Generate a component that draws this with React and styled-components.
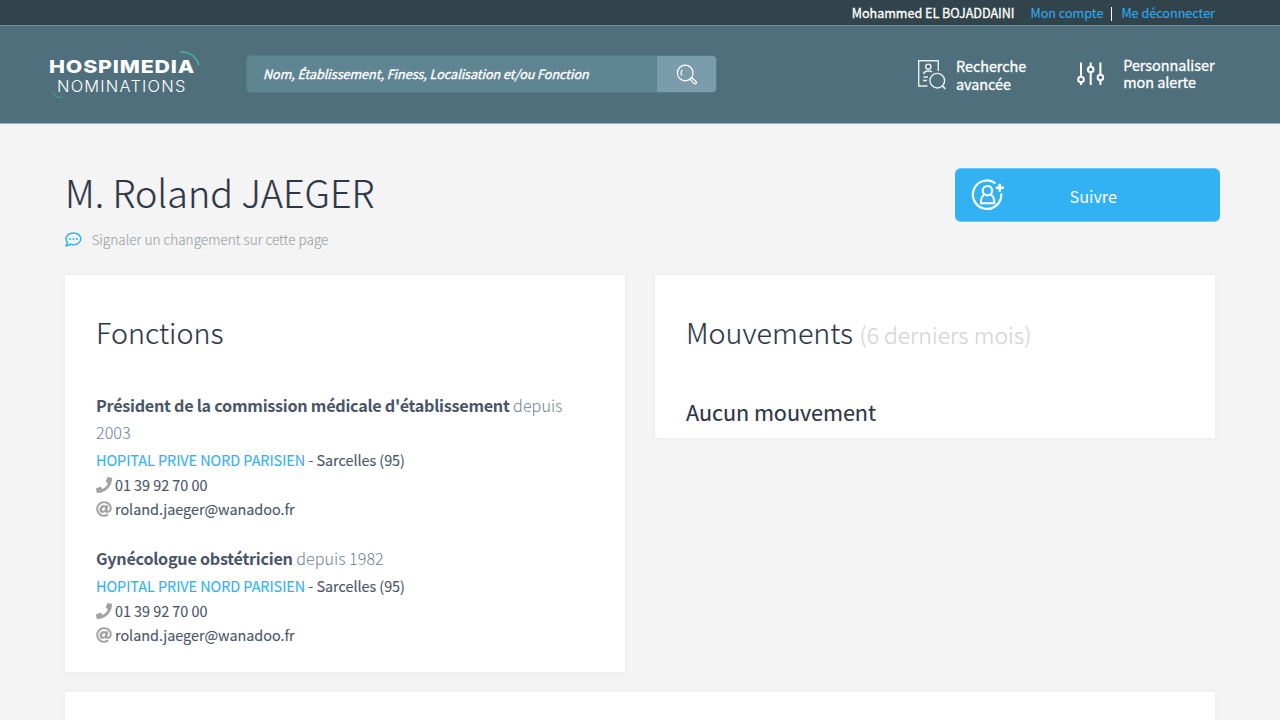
import React from "react";
import styled, { createGlobalStyle } from "styled-components";

const GlobalStyle = createGlobalStyle`
  * { box-sizing: border-box; }
  html, body { margin: 0; height: 100%; overflow: hidden; }
  body {
    background: #f4f4f4;
    color: #2d3748;
    font-family: "Source Sans Pro", "Noto Sans CJK JP", "Open Sans", sans-serif;
    font-size: 14.4px;
  }
  h1, h2, h3, p { margin: 0; font-weight: 300; }
  svg { display: block; flex: none; }
`;

const Screen = styled.div`
  height: 720px;
  overflow: hidden;
`;

const TopBar = styled.div`
  display: flex;
  justify-content: flex-end;
  height: 25px;
  padding-right: 65px;
  background: #31444b;
  color: #fff;
  font-size: 12.6px;
  line-height: 26px;
  white-space: nowrap;
`;
const UserName = styled.span`
  margin-right: 16px;
  letter-spacing: -0.03px;
  -webkit-text-stroke: 0.3px currentColor;
`;
const TopLink = styled.a`
  color: #31a8ea;
  -webkit-text-stroke: 0.15px currentColor;
`;
const Divider = styled.span`
  width: 1px;
  height: 14px;
  margin: 7px 9px 0 8px;
  background: #fff;
`;

const Header = styled.header`
  display: flex;
  height: 99px;
  padding: 24px 0 0 48px;
  background: #4e6f7b;
  border-top: 1px solid #718f9a;
  border-bottom: 1px solid #9db3bc;
  color: #fff;
`;
const SearchBar = styled.div`
  display: flex;
  width: 471px;
  height: 38px;
  margin: 5px 0 0 43px;
  border: 1px solid #567c8a;
  border-radius: 5px;
  overflow: hidden;
  background: #5f8592;
`;
const SearchText = styled.div`
  flex: 1;
  padding-left: 16px;
  font-size: 12.6px;
  line-height: 36px;
  letter-spacing: -0.035px;
  font-style: italic;
  -webkit-text-stroke: 0.35px currentColor;
  white-space: nowrap;
`;
const SearchButton = styled.div`
  display: flex;
  align-items: center;
  justify-content: center;
  width: 59px;
  padding: 2px 0 0 1px;
  background: #7a9cab;
`;
const HeaderAction = styled.div`
  display: flex;
  margin-left: ${(p) => p.$gap}px;
`;
const ActionIcon = styled.div`
  width: ${(p) => p.$width}px;
  padding-top: ${(p) => p.$top}px;
`;
const ActionLabel = styled.span`
  margin: ${(p) => p.$top}px 0 0 ${(p) => p.$left}px;
  line-height: ${(p) => p.$leading}px;
  letter-spacing: -0.03px;
  -webkit-text-stroke: 0.3px currentColor;
  white-space: nowrap;
`;

const Page = styled.main`
  padding: 44px 60px 0 65px;
`;
const Heading = styled.div`
  display: flex;
  justify-content: space-between;
  height: 107px;
`;
const Title = styled.h1`
  height: 50px;
  font-size: 37.7px;
  line-height: 47px;
  color: #2d3748;
  -webkit-text-stroke: 0.2px currentColor;
  white-space: nowrap;
`;
const Report = styled.div`
  display: flex;
  align-items: center;
  gap: 9.500px;
  margin-top: 11px;
  height: 20px;
  font-size: 13.57px;
  font-weight: 300;
  line-height: 20px;
  color: #a0a1a4;
  -webkit-text-stroke: 0.1px currentColor;
  white-space: nowrap;
`;
const FollowButton = styled.div`
  display: flex;
  align-items: center;
  width: 265px;
  height: 54px;
  padding-left: 16px;
  border-top: 1px solid #6ac6f4;
  border-bottom: 1px solid #6ac6f4;
  border-radius: 6px;
  background: #32b2f2;
  color: #fff;
  font-size: 16.2px;
  line-height: 52px;
`;
const FollowLabel = styled.span`
  margin: 2px 0 0 64.500px;
`;

const Columns = styled.div`
  display: grid;
  grid-template-columns: 560px 560px;
  gap: 30px;
  align-items: start;
  margin-bottom: 20px;
`;
const Card = styled.section`
  width: ${(p) => p.$width || 560}px;
  height: ${(p) => p.$height}px;
  padding: 37px 31px 0;
  background: #fff;
  box-shadow: 0 0 4px 1px rgba(0, 0, 0, 0.035);
`;
const CardTitle = styled.h2`
  height: 40px;
  font-size: 28.7px;
  line-height: 40px;
  -webkit-text-stroke: 0.15px currentColor;
  white-space: nowrap;
`;
const Period = styled.span`
  color: #d3d4d8;
  font-size: 22.9px;
`;
const Empty = styled.h3`
  margin-top: 44px;
  font-size: 21.6px;
  font-weight: 400;
  line-height: 32px;
  letter-spacing: -0.05px;
  -webkit-text-stroke: 0.15px currentColor;
`;
const Post = styled.div`
  margin-top: ${(p) => p.$top}px;
  color: #4a5568;
`;
const PostName = styled.h3`
  font-size: 16.2px;
  line-height: 27px;
  color: #718096;
`;
const Strong = styled.strong`
  font-weight: 700;
  letter-spacing: -0.265px;
  color: #4a5568;
`;
const Place = styled.p`
  font-weight: 400;
  line-height: 27px;
  padding-bottom: 0.4px;
  letter-spacing: -0.035px;
  -webkit-text-stroke: 0.12px currentColor;
  white-space: nowrap;
`;
const PlaceLink = styled.a`
  color: #32b2f2;
`;
const Contact = styled.p`
  display: flex;
  align-items: center;
  gap: 3px;
  height: 24px;
  font-weight: 400;
  line-height: 24px;
  letter-spacing: -0.025px;
  -webkit-text-stroke: 0.12px currentColor;
`;

const Logo = () => (
  <svg width="155" height="50" viewBox="48 50 155 50" fill="none">
    <path d="M180.500 51.700C189 51.500 196 56.500 199.200 65" stroke="#46baa6" strokeWidth="1.400" />
    <path d="M52.500 91.500C54.500 96 58 98 62.500 97.500" stroke="#45a99c" strokeWidth="1" />
    <text x="49" y="73.300" textLength="146" lengthAdjust="spacingAndGlyphs" letterSpacing=".7" fill="#fff" fontFamily="Inter, sans-serif" fontWeight="800" fontSize="18">HOSPIMEDIA</text>
    <text x="57" y="92" textLength="129.500" lengthAdjust="spacingAndGlyphs" letterSpacing="1.200" fill="#fff" fontFamily="Inter, sans-serif" fontWeight="300" fontSize="16.500">NOMINATIONS</text>
  </svg>
);

const SearchIcon = () => (
  <svg width="22" height="22" viewBox="0 0 22 22" fill="none" stroke="#fff" strokeWidth="1.200">
    <circle cx="9.200" cy="9" r="7.800" />
    <path d="M5.800 11.500C4.600 9.300 5 7 6.600 5.600" />
    <path d="M14.200 15.600L18.200 19.600C19.600 20.600 21.200 19 20.200 17.700L16 13.800Z" />
  </svg>
);

const DirectoryIcon = () => (
  <svg width="30" height="32" viewBox="0 0 30 32" fill="none" stroke="#e8eef0" strokeWidth="1.400">
    <path d="M10.500 27H1.700V1.700H21.300V12" />
    <circle cx="11.300" cy="7.700" r="2.600" />
    <path d="M6.500 15.200C7 12.500 9 12 11.300 12C13 12 14.300 12.300 15 13" />
    <path d="M6.500 18H11M6 21.500H10" />
    <circle cx="20.300" cy="21.700" r="7.300" />
    <path d="M25.500 27L28.300 29.800" strokeWidth="1.700" />
  </svg>
);

const SlidersIcon = () => (
  <svg width="28" height="24" viewBox="0 0 28 24" fill="none" stroke="#fff" strokeWidth="2">
    <path d="M4 .5V14.500M4 20.500V23M13.700 .5V4.500M13.700 10.500V23M23.400 .5V12.500M23.400 18.500V23" />
    <circle cx="4" cy="17.500" r="2.800" />
    <circle cx="13.700" cy="7.500" r="2.800" />
    <circle cx="23.400" cy="15.500" r="2.800" />
  </svg>
);

const FollowIcon = () => (
  <svg width="34" height="34" viewBox="0 0 34 34" fill="none" stroke="#fff" strokeWidth="2.200">
    <path d="M24.500 5.300A14.200 14.200 0 1 0 30.200 15.500" />
    <circle cx="16.500" cy="12.700" r="4.700" />
    <path d="M12.800 17.200C10.500 18.500 9.900 20 9.900 25.300H23.300C23.300 20 22.500 18.500 20.200 17.200" strokeWidth="2" />
    <path d="M28.800 5.700V13.700M24.800 9.700H32.800" strokeWidth="2.500" />
  </svg>
);

const CommentIcon = () => (
  <svg width="17" height="15" viewBox="0 0 17 15" fill="none" stroke="#32b2f2" strokeWidth="1.500" strokeLinejoin="round">
    <path d="M8.500 .9C12.700 .9 15.800 3.500 15.800 6.800S12.700 12.700 8.500 12.700C7.300 12.700 6.200 12.500 5.300 12.100C4.200 13 2.800 13.800 .9 13.800C1.800 12.800 2.300 11.800 2.500 10.700C1.600 9.600 1 8.300 1 6.800C1 3.500 4.300 .9 8.500 .9Z" />
    <g fill="#32b2f2" stroke="none"><circle cx="5" cy="6.900" r="1" /><circle cx="8.500" cy="6.900" r="1" /><circle cx="12" cy="6.900" r="1" /></g>
  </svg>
);

const PhoneIcon = () => (
  <svg width="16" height="16" viewBox="0 0 512 512" fill="#a3a3a4">
    <path d="M493.400 24.600l-104-24c-11.300-2.600-22.900 3.300-27.500 13.900l-48 112c-4.200 9.800-1.400 21.300 6.900 28l60.600 49.600c-36 76.700-98.900 140.500-177.200 177.200l-49.600-60.600c-6.800-8.300-18.200-11.100-28-6.900l-112 48C3.900 366.500-2 378.100.6 389.400l24 104C27.100 504.200 36.700 512 48 512c256.100 0 464-207.500 464-464 0-11.200-7.700-20.900-18.600-23.400z" />
  </svg>
);

const AtIcon = () => (
  <svg width="16" height="16" viewBox="0 0 512 512" fill="#a3a3a4">
    <path d="M256 8C118.941 8 8 118.919 8 256c0 137.059 110.919 248 248 248 48.154 0 95.342-14.140 135.408-40.223 12.005-7.815 14.625-24.288 5.552-35.372l-10.177-12.433c-7.671-9.371-21.179-11.667-31.373-5.129C325.920 429.757 291.314 440 256 440c-101.458 0-184-82.542-184-184S154.542 72 256 72c100.139 0 184 57.619 184 160 0 38.786-21.093 79.742-58.170 83.693-17.349-.454-16.910-12.857-13.476-30.024l23.433-121.110C394.653 149.750 383.308 136 368.225 136h-44.981a13.518 13.518 0 0 0-13.432 11.993l-.010.092c-14.697-17.901-40.448-21.775-59.971-21.775-74.580 0-137.831 62.234-137.831 151.460 0 65.303 36.785 105.870 96 105.870 26.984 0 57.369-15.637 74.991-38.333 9.522 34.104 40.613 34.104 70.710 34.104C462.609 379.410 504 307.798 504 232 504 95.653 394.023 8 256 8zm-21.680 304.430c-22.249 0-36.070-15.623-36.070-40.771 0-44.993 30.779-72.729 58.630-72.729 22.292 0 35.601 15.241 35.601 40.770 0 45.061-33.875 72.730-58.161 72.730z" />
  </svg>
);

const ContactLines = () => (
  <>
    <Contact><PhoneIcon />01 39 92 70 00</Contact>
    <Contact><AtIcon />roland.jaeger@wanadoo.fr</Contact>
  </>
);

export default function App() {
  return (
    <Screen>
      <GlobalStyle />
      <TopBar>
        <UserName>Mohammed EL BOJADDAINI</UserName>
        <TopLink>Mon compte</TopLink>
        <Divider />
        <TopLink>Me déconnecter</TopLink>
      </TopBar>
      <Header>
        <Logo />
        <SearchBar>
          <SearchText>Nom, Établissement, Finess, Localisation et/ou Fonction</SearchText>
          <SearchButton><SearchIcon /></SearchButton>
        </SearchBar>
        <HeaderAction $gap={200}>
          <ActionIcon $width={30} $top={9}><DirectoryIcon /></ActionIcon>
          <ActionLabel $top={7} $left={9} $leading={18}>Recherche<br />avancée</ActionLabel>
        </HeaderAction>
        <HeaderAction $gap={51}>
          <ActionIcon $width={28} $top={12}><SlidersIcon /></ActionIcon>
          <ActionLabel $top={6} $left={18} $leading={17}>Personnaliser<br />mon alerte</ActionLabel>
        </HeaderAction>
      </Header>
      <Page>
        <Heading>
          <div>
            <Title>M. Roland JAEGER</Title>
            <Report><CommentIcon />Signaler un changement sur cette page</Report>
          </div>
          <FollowButton><FollowIcon /><FollowLabel>Suivre</FollowLabel></FollowButton>
        </Heading>
        <Columns>
          <Card $height={397}>
            <CardTitle>Fonctions</CardTitle>
            <Post $top={40}>
              <PostName><Strong>Président de la commission médicale d'établissement</Strong> depuis 2003</PostName>
              <Place><PlaceLink>HOPITAL PRIVE NORD PARISIEN</PlaceLink> - Sarcelles (95)</Place>
              <ContactLines />
            </Post>
            <Post $top={23.6}>
              <PostName><Strong>Gynécologue obstétricien</Strong> depuis 1982</PostName>
              <Place><PlaceLink>HOPITAL PRIVE NORD PARISIEN</PlaceLink> - Sarcelles (95)</Place>
              <ContactLines />
            </Post>
          </Card>
          <Card $height={163}>
            <CardTitle>Mouvements <Period>(6 derniers mois)</Period></CardTitle>
            <Empty>Aucun mouvement</Empty>
          </Card>
        </Columns>
        <Card $width={1150} $height={60} />
      </Page>
    </Screen>
  );
}
